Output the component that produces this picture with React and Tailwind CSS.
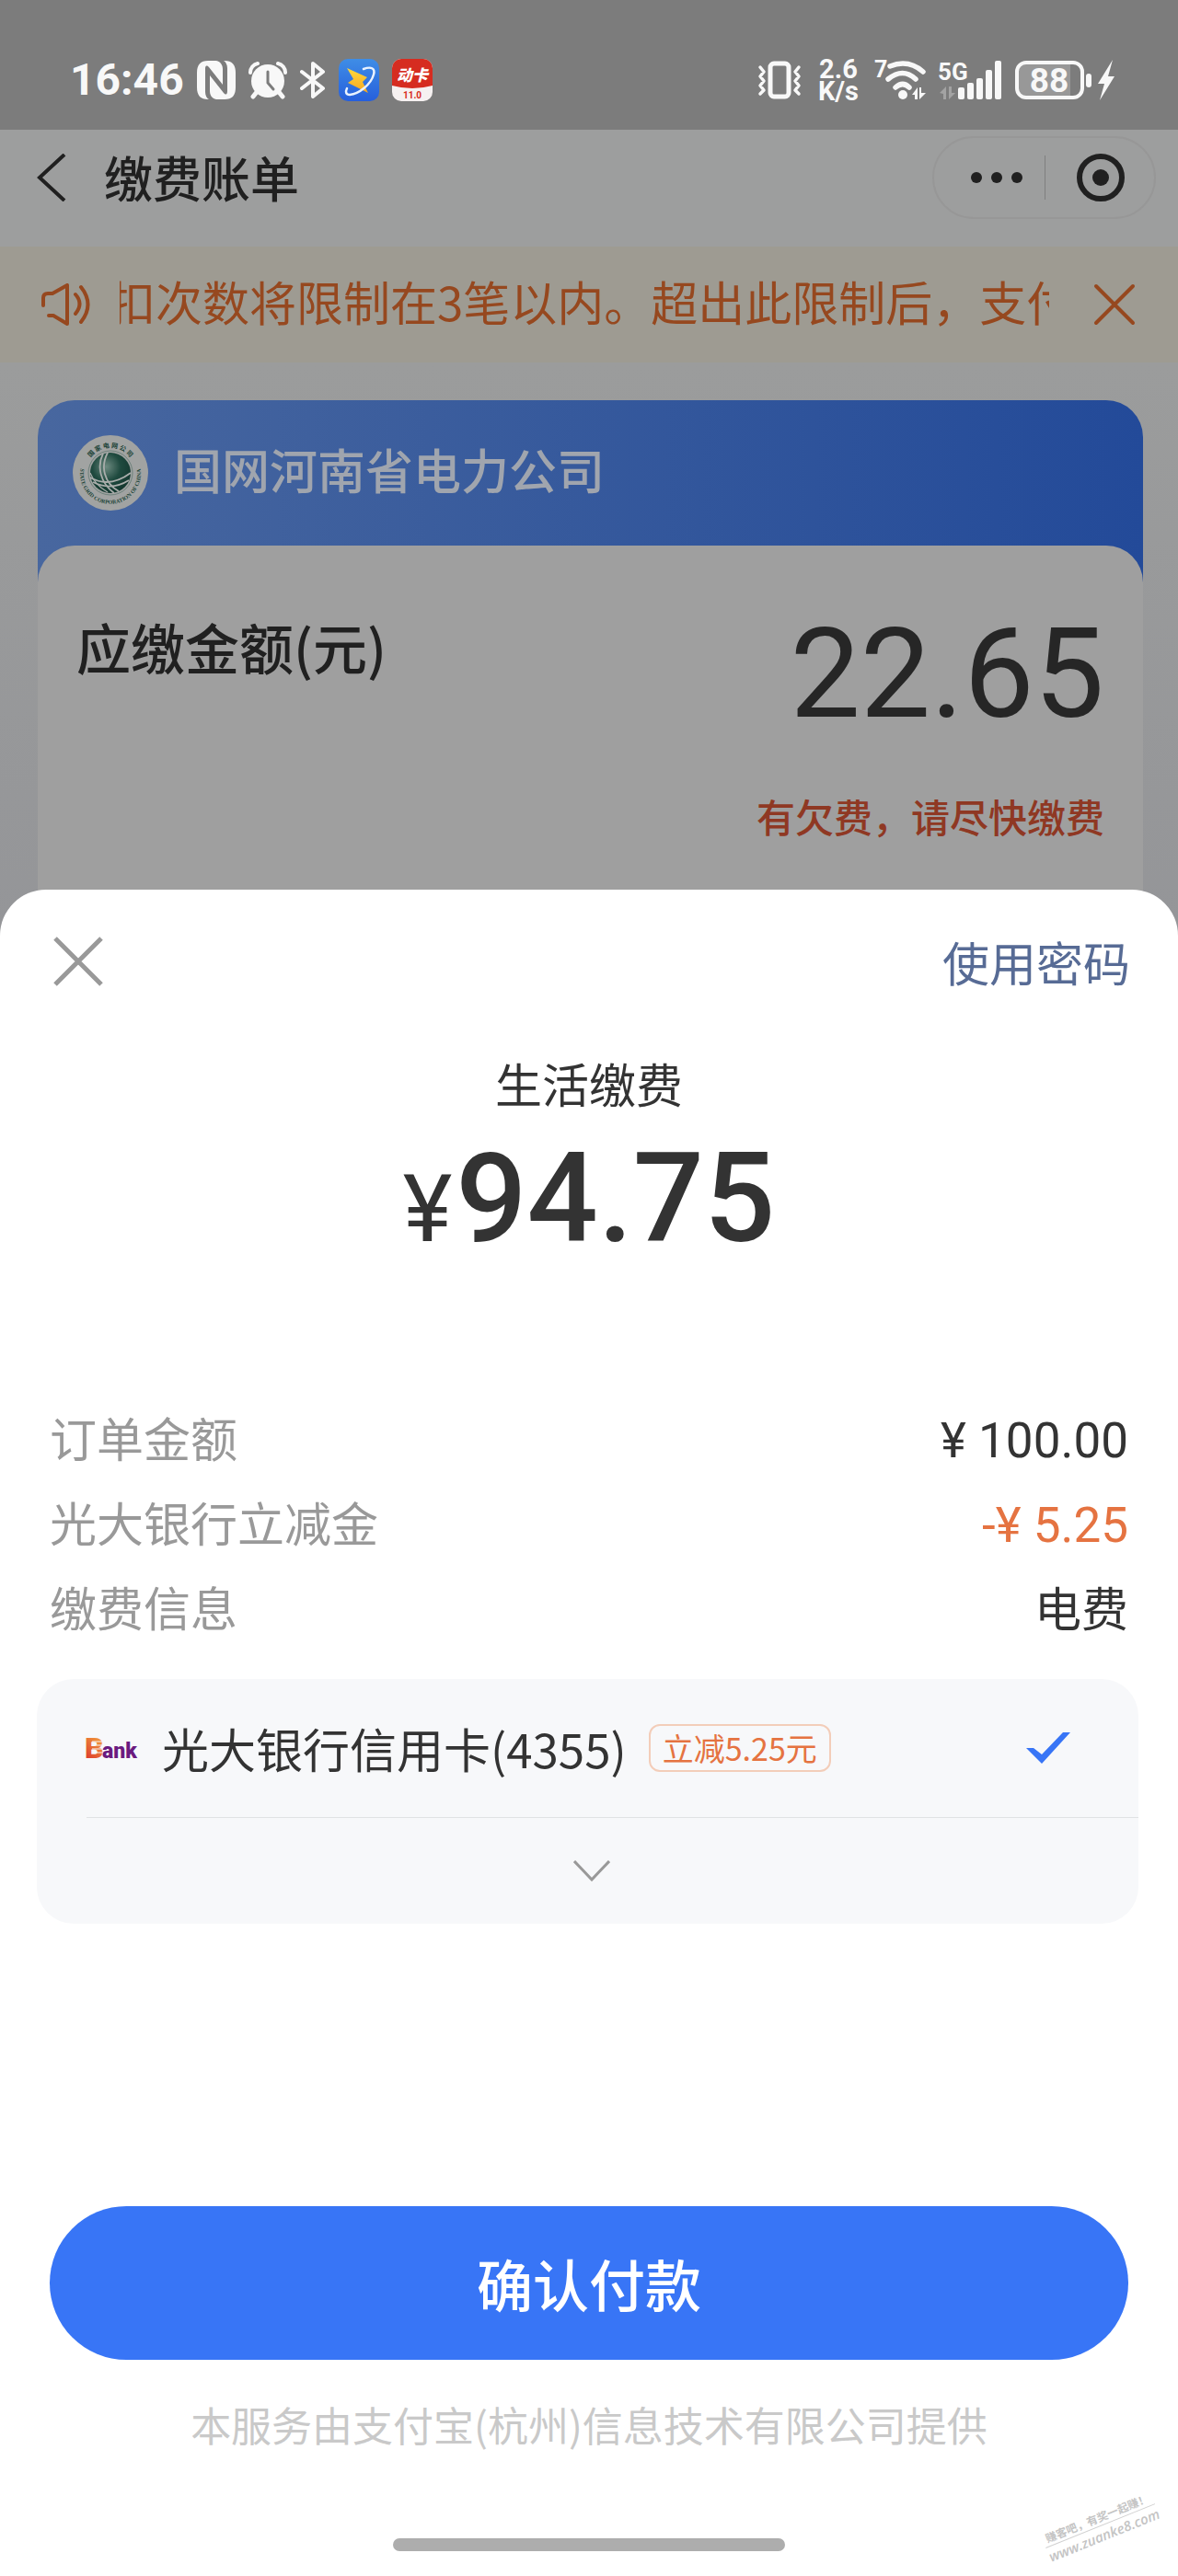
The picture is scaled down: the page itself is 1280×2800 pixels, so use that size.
import { useState } from 'react'

const noticeText = '扣次数将限制在3笔以内。超出此限制后\uFF0C支付';
const overdueText = '有欠费\uFF0C请尽快缴费';
const sloganText = '赚客吧\uFF0C有奖一起赚\uFF01';

const orderRows = [
  { label: '订单金额', value: '¥ 100.00', tone: 'text-[#333333] font-[Roboto] text-[53px]' },
  { label: '光大银行立减金', value: '-¥ 5.25', tone: 'text-[#e57341] font-[Roboto] text-[53px]' },
  { label: '缴费信息', value: '电费', tone: 'text-[#333333]' },
];

const NfcIcon = () => (
  <svg className="w-[42px] h-[42px]" viewBox="0 0 42 42" fill="#f8f8f8">
    <path d="M12 0H21C26 1 28 5 28 9V26L13 7C10 4 9 6 9 9V34C9 38 11 41 13 42H12C4 42 0 38 0 29V13C0 4 4 0 12 0Z" />
    <path d="M30 0C38 0 42 4 42 13V29C42 38 38 42 30 42H21C16 41 14 37 14 33V16L29 35C32 38 33 36 33 33V8C33 4 31 1 29 0Z" />
  </svg>
);

const AlarmIcon = () => (
  <svg className="w-[42px] h-[42px]" viewBox="0 0 42 42">
    <path d="M2 13A10 10 0 0 1 10 3M40 13A10 10 0 0 0 32 3" stroke="#f8f8f8" strokeWidth="4" fill="none" strokeLinecap="round" />
    <path d="M9 34L5 39M33 34L37 39" stroke="#f8f8f8" strokeWidth="5" strokeLinecap="round" />
    <circle cx="21" cy="22" r="18" fill="#f8f8f8" />
    <path d="M21 12V24L27 31" stroke="#7c7c7c" strokeWidth="3" fill="none" strokeLinecap="round" />
  </svg>
);

const BluetoothIcon = () => (
  <svg className="w-[28px] h-[42px]" viewBox="0 0 28 42" fill="none" stroke="#f8f8f8" strokeWidth="4" strokeLinecap="round" strokeLinejoin="round">
    <path d="M2 12L25 30L14 39V3L25 12L2 30" />
  </svg>
);

const BoltAppIcon = () => (
  <svg className="w-[44px] h-[46px]" viewBox="0 0 44 46">
    <defs>
      <linearGradient id="boltApp" x1="0" y1="0" x2="0" y2="1">
        <stop offset="0" stopColor="#3f8de6" />
        <stop offset="1" stopColor="#265fdc" />
      </linearGradient>
      <linearGradient id="boltShape" x1="0" y1="0" x2="0" y2="1">
        <stop offset="0" stopColor="#ffd93b" />
        <stop offset="1" stopColor="#f5a623" />
      </linearGradient>
    </defs>
    <rect width="44" height="46" rx="10" fill="url(#boltApp)" />
    <path d="M9 10L31 20L26 25L32 37L10 26L16 22Z" fill="url(#boltShape)" />
    <path d="M27 11C35 8 40 10 38 17C35 28 22 38 12 39C8 39 7 36 9 32" fill="none" stroke="#e9f2ff" strokeWidth="2.5" strokeLinecap="round" />
  </svg>
);

const CardAppIcon = () => (
  <svg className="w-[44px] h-[46px]" viewBox="0 0 44 46">
    <defs>
      <clipPath id="cardApp"><rect width="44" height="46" rx="10" /></clipPath>
    </defs>
    <g clipPath="url(#cardApp)">
      <rect width="44" height="46" fill="#f6f1f1" />
      <path d="M0 0H44V29Q22 35 0 29Z" fill="#d62c20" />
    </g>
    <text x="22" y="24" textAnchor="middle" fontSize="17" fontWeight="900" fontStyle="italic" fill="#ffffff" fontFamily="'Noto Sans CJK SC', sans-serif">动卡</text>
    <text x="22" y="43" textAnchor="middle" fontSize="10" fontWeight="700" fill="#d62c20" fontFamily="Roboto, sans-serif">11.0</text>
  </svg>
);

const VibrateIcon = () => (
  <svg className="w-[48px] h-[42px]" viewBox="0 0 48 42" fill="none" stroke="#f8f8f8" strokeLinecap="round" strokeLinejoin="round">
    <rect x="14" y="3" width="20" height="36" rx="4" strokeWidth="5" />
    <path d="M3 7L7 12L3 17L7 22L3 27L7 32L3 36M45 7L41 12L45 17L41 22L45 27L41 32L45 36" strokeWidth="3.5" />
  </svg>
);

const WifiIcon = () => (
  <svg className="w-[56px] h-[46px] overflow-visible" viewBox="0 0 56 46">
    <text x="-1" y="20" fontSize="25" fontWeight="700" fill="#f8f8f8" fontFamily="Roboto, sans-serif">7</text>
    <g fill="none" stroke="#f8f8f8" strokeWidth="5.5" strokeLinecap="round">
      <path d="M16 8Q36 0 52 14" />
      <path d="M14 22Q30 9 44 22" />
      <path d="M22 31Q30 24 37 31" />
    </g>
    <circle cx="30" cy="39" r="5" fill="#f8f8f8" />
    <path d="M40 39L46 31V44H43V39ZM48 31H50V37H55L48 44Z" fill="#f8f8f8" />
  </svg>
);

const SignalIcon = () => (
  <svg className="w-[68px] h-[46px] overflow-visible" viewBox="0 0 68 46">
    <text x="-2" y="23" fontSize="26" fontWeight="700" fill="#f8f8f8" fontFamily="Roboto, sans-serif">5G</text>
    <path d="M0 37L7 30V44H4V38ZM10 30H13V37H17L10 44Z" fill="#a3a3a3" />
    <g fill="#f8f8f8">
      <rect x="20" y="31" width="7" height="13" rx="2" />
      <rect x="30" y="26" width="7" height="18" rx="2" />
      <rect x="40" y="21" width="7" height="23" rx="2" />
      <rect x="50" y="12" width="7" height="32" rx="2" />
      <rect x="60" y="2" width="7" height="42" rx="2" />
    </g>
  </svg>
);

const BatteryIcon = () => (
  <svg className="w-[109px] h-[44px]" viewBox="0 0 109 44">
    <path d="M12 3H60V41H12Q3 41 3 32V12Q3 3 12 3Z" fill="#989898" />
    <rect x="2" y="3" width="71" height="38" rx="10" fill="none" stroke="#f8f8f8" strokeWidth="4" />
    <rect x="77" y="15" width="6" height="15" rx="3" fill="#f8f8f8" />
    <path d="M106 0L90 26H97L92 44L108 18H101Z" fill="#f8f8f8" />
    <text x="37" y="35" textAnchor="middle" fontSize="37" fontWeight="700" fill="#f8f8f8" fontFamily="Roboto, sans-serif">88</text>
  </svg>
);

const StateGridLogo = () => (
  <svg className="w-[82px] h-[82px]" viewBox="0 0 82 82">
    <defs>
      <radialGradient id="globe" cx="0.4" cy="0.35" r="0.7">
        <stop offset="0" stopColor="#6d8a80" />
        <stop offset="0.5" stopColor="#1f4a3f" />
        <stop offset="1" stopColor="#12362d" />
      </radialGradient>
      <path id="arcTop" d="M15 48A27 27 0 1 1 67 48" />
      <path id="arcBottom" d="M11 28A33 33 0 1 0 71 28" />
    </defs>
    <circle cx="41" cy="41" r="41" fill="#a1a3a2" />
    <circle cx="41" cy="41" r="24" fill="none" stroke="#4a6b61" strokeWidth="0.6" />
    <circle cx="41" cy="41" r="22" fill="url(#globe)" />
    <g fill="none" stroke="#a9adab">
      <path d="M33 20C26 34 30 52 45 63M38 19C30 34 34 52 50 61" strokeWidth="1.8" />
      <path d="M19 46Q40 58 63 41M22 51Q42 61 61 49" strokeWidth="1.8" />
      <path d="M19 41Q24 54 38 62" strokeWidth="1.2" />
    </g>
    <text fontSize="7" fontWeight="700" fill="#1d4438" fontFamily="'Noto Sans CJK SC', sans-serif">
      <textPath href="#arcTop" startOffset="50%" textAnchor="middle">国 家 电 网 公 司</textPath>
    </text>
    <text fontSize="6" fontWeight="700" fill="#1d4438" fontFamily="'Liberation Serif', serif">
      <textPath href="#arcBottom" startOffset="50%" textAnchor="middle">STATE GRID CORPORATION OF CHINA</textPath>
    </text>
  </svg>
);

const BankLogo = () => (
  <svg className="w-[56px] h-[26px] overflow-visible" viewBox="0 0 56 26">
    <defs>
      <linearGradient id="bankB" x1="0" y1="1" x2="0.5" y2="0">
        <stop offset="0" stopColor="#d8232a" />
        <stop offset="1" stopColor="#f2a03c" />
      </linearGradient>
    </defs>
    <text x="-2" y="24" fontSize="32" fontWeight="900" fill="url(#bankB)" fontFamily="Roboto, sans-serif">B</text>
    <path d="M6 6H18M6 10H18M6 14H18M6 18H18" stroke="#f7f8fa" strokeWidth="1" />
    <text x="17" y="24" fontSize="23" fontWeight="900" fill="#6a1b7f" fontFamily="Roboto, sans-serif">ank</text>
  </svg>
);

const StatusBar = () => (
  <div className="h-[141px] bg-[#7c7c7c] flex items-center justify-between pt-8 pl-[76px] pr-[68px]">
    <div className="flex items-center gap-[14px]">
      <span className="font-[Roboto] font-bold text-[48px] leading-none text-[#f8f8f8]">16:46</span>
      <NfcIcon />
      <AlarmIcon />
      <BluetoothIcon />
      <BoltAppIcon />
      <CardAppIcon />
    </div>
    <div className="flex items-center gap-[14px]">
      <VibrateIcon />
      <div className="mx-1 flex flex-col items-center font-[Roboto] font-bold text-[29px] leading-[24px] text-[#f8f8f8]">
        <span>2.6</span>
        <span>K/s</span>
      </div>
      <WifiIcon />
      <SignalIcon />
      <BatteryIcon />
    </div>
  </div>
);

const NavBar = () => (
  <header className="h-[127px] bg-[#9d9e9e] flex items-center justify-between pb-6 pl-10 pr-6">
    <div className="flex items-center gap-[41px]">
      <button type="button" aria-label="返回">
        <svg className="w-[32px] h-[52px]" viewBox="0 0 32 52" fill="none" stroke="#202020" strokeWidth="4">
          <path d="M30 1L3 26L30 51" />
        </svg>
      </button>
      <h1 className="text-[53px] leading-none text-[#202020] font-medium">缴费账单</h1>
    </div>
    <div className="flex items-center h-[90px] w-[243px] rounded-full border-2 border-[#979797] pl-10">
      <button type="button" aria-label="更多">
        <svg className="w-[56px] h-[12px]" viewBox="0 0 56 12" fill="#202020">
          <circle cx="6" cy="6" r="6" />
          <circle cx="28" cy="6" r="6" />
          <circle cx="50" cy="6" r="6" />
        </svg>
      </button>
      <span className="w-[1px] h-12 bg-[#7f7f7f] ml-6 mr-[34px]" />
      <button type="button" aria-label="关闭小程序">
        <svg className="w-[52px] h-[52px]" viewBox="0 0 52 52">
          <circle cx="26" cy="26" r="23" fill="none" stroke="#202020" strokeWidth="6" />
          <circle cx="26" cy="26" r="9" fill="#202020" />
        </svg>
      </button>
    </div>
  </header>
);

const Notice = () => (
  <div className="h-[126px] bg-[#9e9b92] flex items-center pl-11 pr-[46px] text-[#96481f]">
    <svg className="w-[56px] h-[46px] shrink-0" viewBox="0 0 56 46" fill="none" stroke="currentColor" strokeWidth="4" strokeLinecap="round" strokeLinejoin="round">
      <path d="M3 24V16Q3 11 8 11H13L29 2V44L14 35H9" />
      <path d="M38 12Q47 22 38 33M44 4Q59 23 44 42" />
    </svg>
    <div className="ml-[30px] mr-[48px] pb-2 flex-1 overflow-hidden whitespace-nowrap">
      <p className="-ml-3 text-[51px] leading-[72px]">{noticeText}</p>
    </div>
    <button type="button" aria-label="关闭公告" className="shrink-0">
      <svg className="w-[46px] h-[46px]" viewBox="0 0 46 46" fill="none" stroke="currentColor" strokeWidth="4" strokeLinecap="round">
        <path d="M3 3L43 43M43 3L3 43" />
      </svg>
    </button>
  </div>
);

const BillCard = () => (
  <section className="bg-gradient-to-b from-[#9b9c9c] to-[#949598] pl-[41px] pr-[38px] pt-[41px]">
    <div className="rounded-t-[40px] bg-gradient-to-r from-[#48679f] to-[#234a99]">
      <div className="h-[158px] flex items-center gap-[28px] pl-[38px]">
        <StateGridLogo />
        <h2 className="pb-2 text-[52px] leading-none font-medium text-[#a0a5ae]">国网河南省电力公司</h2>
      </div>
      <div className="rounded-t-[40px] bg-[#9f9f9f] h-[460px] px-[42px] pt-[74px]">
        <div className="flex items-start justify-between">
          <span className="text-[59px] leading-[72px] font-medium text-[#202020]">应缴金额(元)</span>
          <span className="font-[Roboto] text-[136px] leading-[132px] text-[#262626]">22.65</span>
        </div>
        <p className="mt-[58px] text-right text-[42px] leading-[60px] font-medium text-[#8f3823]">{overdueText}</p>
      </div>
    </div>
  </section>
);

const PayMethod = ({ expanded, onToggle }) => (
  <div className="ml-[40px] mr-[43px] mt-[33px] rounded-[40px] bg-[#f7f8fa]">
    <div className="ml-[54px] h-[151px] flex items-center border-b border-[#e0e2e4] pr-[74px]">
      <BankLogo />
      <span className="ml-[26px] text-[51px] leading-[72px] text-[#333333]">光大银行信用卡(4355)</span>
      <span className="ml-[24px] h-[52px] px-[13px] flex items-center rounded-xl border-2 border-[#f3cdb9] text-[34px] leading-none text-[#e57341]">立减5.25元</span>
      <svg className="ml-auto w-[48px] h-[34px]" viewBox="0 0 48 34" fill="#3875f6">
        <path d="M0 17H8L17 24L40 0H48L17 34Z" />
      </svg>
    </div>
    <button type="button" aria-label="更多付款方式" aria-expanded={expanded} onClick={onToggle} className="w-full h-[115px] pl-2 flex items-center justify-center">
      <svg className="w-[40px] h-[24px]" viewBox="0 0 40 24" fill="none" stroke="#999999" strokeWidth="3">
        <path d="M1 1L20 21L39 1" />
      </svg>
    </button>
  </div>
);

const PaySheet = () => {
  const [expanded, setExpanded] = useState(false);

  return (
    <main className="relative -mt-[86px] rounded-t-[50px] bg-white flex-1 flex flex-col">
      <div className="flex items-center justify-between pl-[58px] pr-[52px] pt-[40px]">
        <button type="button" aria-label="关闭">
          <svg className="w-[54px] h-[54px]" viewBox="0 0 54 54" fill="none" stroke="#999999" strokeWidth="5">
            <path d="M2 2L52 52M52 2L2 52" />
          </svg>
        </button>
        <a href="#password" className="text-[51px] leading-[76px] text-[#576b95]">使用密码</a>
      </div>

      <div className="mt-[58px] flex flex-col items-center text-[#333333]">
        <h2 className="text-[51px] leading-[72px]">生活缴费</h2>
        <p className="mt-[10px] flex items-baseline gap-1 font-[Roboto]">
          <span className="text-[102px] leading-[160px]">¥</span>
          <span className="text-[136px] leading-[160px] font-medium">94.75</span>
        </p>
      </div>

      <dl className="mt-[122px] px-[54px] text-[51px] leading-[92px]">
        {orderRows.map((row) => (
          <div key={row.label} className="h-[92px] flex items-baseline justify-between">
            <dt className="text-[#999999]">{row.label}</dt>
            <dd className={row.tone}>{row.value}</dd>
          </div>
        ))}
      </dl>

      <PayMethod expanded={expanded} onToggle={() => setExpanded(!expanded)} />

      <button type="button" className="mx-[54px] mt-[307px] h-[167px] rounded-full bg-[#3875f6] text-[61px] font-medium text-white">
        确认付款
      </button>
      <p className="mt-[38px] text-center text-[44px] leading-[64px] text-[#c9c9c9]">本服务由支付宝(杭州)信息技术有限公司提供</p>
      <div className="mx-auto mt-[92px] mb-[26px] w-1/3 h-[14px] rounded-full bg-[#adadad]" />

      <div className="absolute right-[20px] bottom-[34px] -rotate-[22deg] text-center text-[#c4c4c4]">
        <p className="text-[12px] leading-[18px] font-bold border-b border-[#d0d0d0]">{sloganText}</p>
        <p className="font-['Open_Sans'] text-[15px] leading-[20px] font-semibold italic">www.zuanke8.com</p>
      </div>
    </main>
  );
};

const App = () => {
  return (
    <div className="min-h-screen flex flex-col overflow-hidden bg-white font-['Noto_Sans_CJK_SC',sans-serif]">
      <StatusBar />
      <NavBar />
      <Notice />
      <BillCard />
      <PaySheet />
    </div>
  );
};

export default App
